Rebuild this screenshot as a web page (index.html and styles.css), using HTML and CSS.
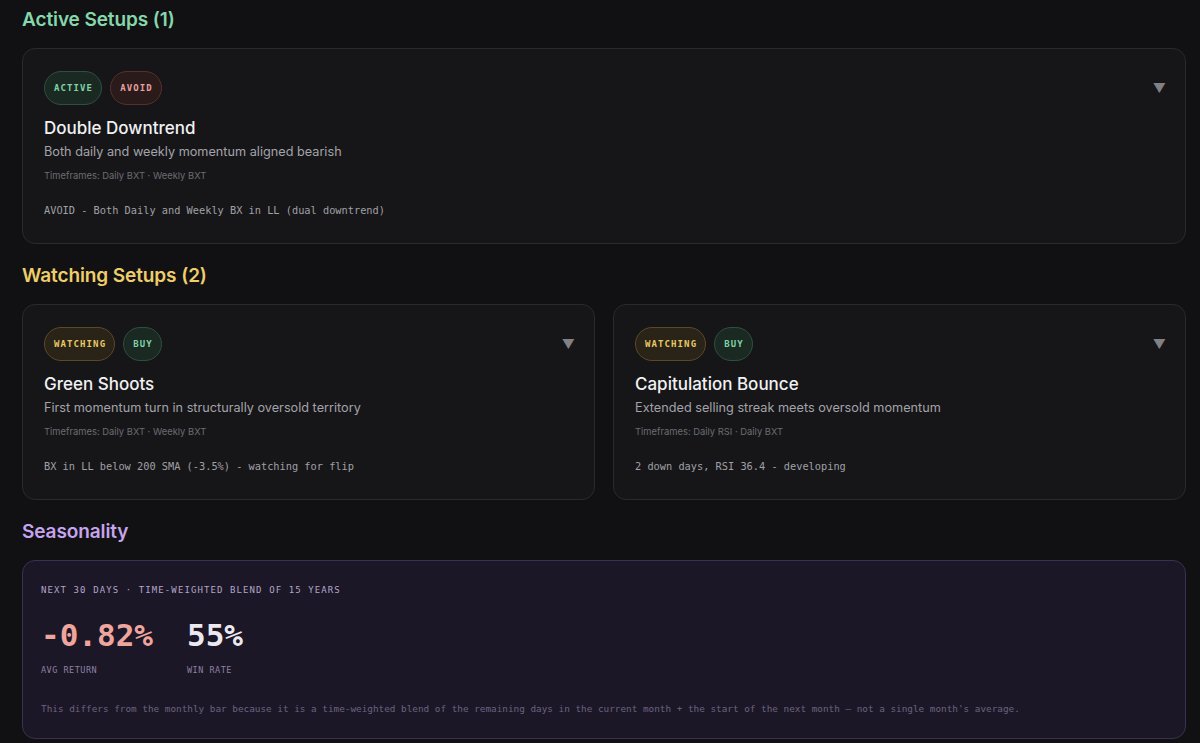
FILE: index.html
```html
<!DOCTYPE html>
<html lang="en">
<head>
<meta charset="utf-8">
<title>Setups</title>
<link rel="stylesheet" href="styles.css">
</head>
<body>
<main class="page">
  <section class="section">
    <h2 class="section-title green">Active Setups (1)</h2>
    <div class="grid one">
      <article class="card">
        <div class="card-head">
          <div class="badges">
            <span class="badge badge-green">ACTIVE</span>
            <span class="badge badge-red">AVOID</span>
          </div>
          <span class="caret">▼</span>
        </div>
        <h3 class="card-title">Double Downtrend</h3>
        <p class="card-desc">Both daily and weekly momentum aligned bearish</p>
        <p class="card-tf">Timeframes: Daily BXT · Weekly BXT</p>
        <p class="card-note">AVOID - Both Daily and Weekly BX in LL (dual downtrend)</p>
      </article>
    </div>
  </section>

  <section class="section">
    <h2 class="section-title yellow">Watching Setups (2)</h2>
    <div class="grid two">
      <article class="card">
        <div class="card-head">
          <div class="badges">
            <span class="badge badge-yellow">WATCHING</span>
            <span class="badge badge-green">BUY</span>
          </div>
          <span class="caret">▼</span>
        </div>
        <h3 class="card-title">Green Shoots</h3>
        <p class="card-desc">First momentum turn in structurally oversold territory</p>
        <p class="card-tf">Timeframes: Daily BXT · Weekly BXT</p>
        <p class="card-note">BX in LL below 200 SMA (-3.5%) - watching for flip</p>
      </article>
      <article class="card">
        <div class="card-head">
          <div class="badges">
            <span class="badge badge-yellow">WATCHING</span>
            <span class="badge badge-green">BUY</span>
          </div>
          <span class="caret">▼</span>
        </div>
        <h3 class="card-title">Capitulation Bounce</h3>
        <p class="card-desc">Extended selling streak meets oversold momentum</p>
        <p class="card-tf">Timeframes: Daily RSI · Daily BXT</p>
        <p class="card-note">2 down days, RSI 36.4 - developing</p>
      </article>
    </div>
  </section>

  <section class="section">
    <h2 class="section-title purple">Seasonality</h2>
    <div class="season">
      <p class="season-label">NEXT 30 DAYS · TIME-WEIGHTED BLEND OF 15 YEARS</p>
      <div class="stats">
        <div class="stat">
          <div class="stat-value neg">-0.82%</div>
          <div class="stat-label">AVG RETURN</div>
        </div>
        <div class="stat">
          <div class="stat-value">55%</div>
          <div class="stat-label">WIN RATE</div>
        </div>
      </div>
      <p class="season-note">This differs from the monthly bar because it is a time-weighted blend of the remaining days in the current month + the start of the next month — not a single month's average.</p>
    </div>
  </section>
</main>
</body>
</html>
```

FILE: styles.css
```css
* { box-sizing: border-box; }

html, body {
  margin: 0;
  padding: 0;
  background: #111113;
}

body {
  font-family: Inter, "Noto Sans", sans-serif;
  color: #ececef;
}

.page {
  padding: 8px 14px 0 22px;
  display: flex;
  flex-direction: column;
  gap: 20px;
}

.section-title {
  margin: 0 0 16px;
  font-size: 19px;
  line-height: 24px;
  font-weight: 600;
  letter-spacing: -0.1px;
}
.green { color: #86d7ac; }
.yellow { color: #efcd6b; }
.purple { color: #c6a5ee; }

.grid { display: grid; gap: 18px; }
.grid.one { grid-template-columns: 1fr; }
.grid.two { grid-template-columns: 1fr 1fr; }

.card {
  background: #161618;
  border: 1px solid #2a2a2e;
  border-radius: 13px;
  padding: 22px 21px 25px;
}

.card-head {
  display: flex;
  justify-content: space-between;
  align-items: center;
  margin-bottom: 12px;
}

.badges { display: flex; gap: 8px; }

.badge {
  height: 34px;
  padding: 0 8px 0 9px;
  display: inline-flex;
  align-items: center;
  border-radius: 17px;
  font-family: "DejaVu Sans Mono", "Liberation Mono", monospace;
  font-size: 9px;
  font-weight: 700;
  letter-spacing: 1.1px;
  border: 1px solid;
}
.badge-green { background: #1a2a23; border-color: #2e4f40; color: #80d3a6; }
.badge-red { background: #2a1a1a; border-color: #553030; color: #e6a1a0; }
.badge-yellow { background: #2a2317; border-color: #5b4927; color: #e7c865; }

.caret {
  color: #808087;
  font-size: 13px;
  line-height: 13px;
  margin-right: -2px;
}

.card-title {
  margin: 0;
  font-size: 17px;
  line-height: 22px;
  font-weight: 500;
  color: #f1f1f3;
}

.card-desc {
  margin: 3px 0 0;
  font-size: 12.7px;
  line-height: 20px;
  color: #a3a3aa;
}

.card-tf {
  margin: 7px 0 0;
  font-size: 9.4px;
  line-height: 14px;
  color: #6c6c73;
}

.card-note {
  margin: 19px 0 0;
  font-family: "DejaVu Sans Mono", "Liberation Mono", monospace;
  font-size: 10.3px;
  line-height: 16px;
  color: #a0a0a6;
}

.season {
  background: #1c1726;
  border: 1px solid #3c3050;
  border-radius: 13px;
  padding: 22px 18px 22px;
}

.season-label {
  margin: 0;
  font-family: "DejaVu Sans Mono", "Liberation Mono", monospace;
  font-size: 9px;
  line-height: 14px;
  letter-spacing: 1.1px;
  color: #b3a5cb;
}

.stats {
  display: flex;
  gap: 34px;
  margin-top: 20px;
}

.stat-value {
  font-family: "DejaVu Sans Mono", "Liberation Mono", monospace;
  font-size: 31px;
  line-height: 36px;
  font-weight: 700;
  color: #ebe9ef;
}
.stat-value.neg { color: #eea59e; }

.stat-label {
  margin-top: 11px;
  font-family: "DejaVu Sans Mono", "Liberation Mono", monospace;
  font-size: 8.5px;
  line-height: 12px;
  letter-spacing: 0.5px;
  color: #8c80a3;
}

.season-note {
  margin: 26px 0 0;
  font-family: "DejaVu Sans Mono", "Liberation Mono", monospace;
  font-size: 9.35px;
  line-height: 14px;
  color: #6c6282;
}
```
